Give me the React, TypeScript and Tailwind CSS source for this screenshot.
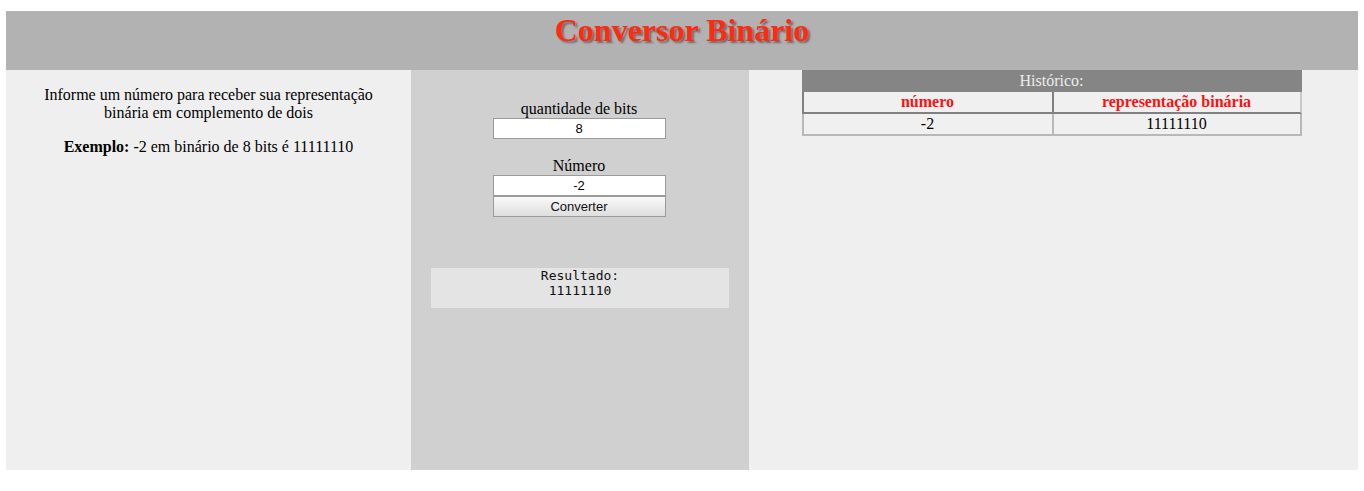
const serif = { fontFamily: '"Liberation Serif", "Times New Roman", serif' };
const sans = { fontFamily: '"Liberation Sans", Arial, sans-serif' };

export default function App() {
  return (
    <div className="w-full min-h-[491px] bg-white pt-[11px] px-[6px]" style={serif}>
      <header className="h-[59px] bg-[#b2b2b2] text-center pt-[1px]">
        <h1 className="text-[32px] leading-[37px] font-bold text-[#ff2a10] [text-shadow:2px_2px_2px_#6b6b6b]">
          Conversor Binário
        </h1>
      </header>

      <div className="flex h-[400px] text-[16px] text-black">
        <section className="w-[405px] bg-[#efefef] px-[30px] pt-[16px] text-center leading-[18px]">
          <p>Informe um número para receber sua representação binária em complemento de dois</p>
          <p className="mt-[16px]">
            <b>Exemplo:</b> -2 em binário de 8 bits é 11111110
          </p>
        </section>

        <section className="w-[338px] bg-[#d0d0d0] flex flex-col items-center pt-[30px] pr-[2px]">
          <label className="leading-[18px]">quantidade de bits</label>
          <input
            defaultValue="8"
            className="w-[173px] h-[21px] bg-white border border-[#9a9a9a] text-center text-[13px] outline-none"
            style={sans}
          />
          <label className="mt-[18px] leading-[18px]">Número</label>
          <input
            defaultValue="-2"
            className="w-[173px] h-[21px] bg-white border border-[#9a9a9a] text-center text-[13px] outline-none"
            style={sans}
          />
          <button
            className="w-[173px] h-[21px] border border-[#9a9a9a] bg-gradient-to-b from-[#fafafa] to-[#dedede] text-[13px] leading-[19px] text-[#111]"
            style={sans}
          >
            Converter
          </button>
          <pre
            className="mt-[51px] ml-[2px] w-[298px] h-[40px] bg-[#e4e4e4] text-center text-[13px] leading-[15px] text-[#111]"
            style={{ fontFamily: '"DejaVu Sans Mono", "Liberation Mono", monospace' }}
          >
            {"Resultado:\n11111110"}
          </pre>
        </section>

        <section className="flex-1 bg-[#efefef] flex justify-center pr-[4px]">
          <div className="w-[500px] self-start">
            <div className="h-[22px] bg-[#858585] text-[#ececec] text-center leading-[22px]">Histórico:</div>
            <div className="grid grid-cols-2 bg-[#f0f0f0]">
              <div className="h-[22px] border-l-2 border-b-2 border-[#808080] text-center font-bold text-[#ff1010] leading-[20px]">
                número
              </div>
              <div className="h-[22px] border-l-2 border-r-2 border-b-2 border-r-[#c8c8c8] border-l-[#808080] border-b-[#808080] text-center font-bold text-[#ff1010] leading-[20px]">
                representação binária
              </div>
              <div className="h-[22px] border-l-2 border-b-2 border-[#b8b8b8] text-center leading-[20px]">-2</div>
              <div className="h-[22px] border-l-2 border-r-2 border-b-2 border-[#b8b8b8] text-center leading-[20px]">
                11111110
              </div>
            </div>
          </div>
        </section>
      </div>
    </div>
  );
}
